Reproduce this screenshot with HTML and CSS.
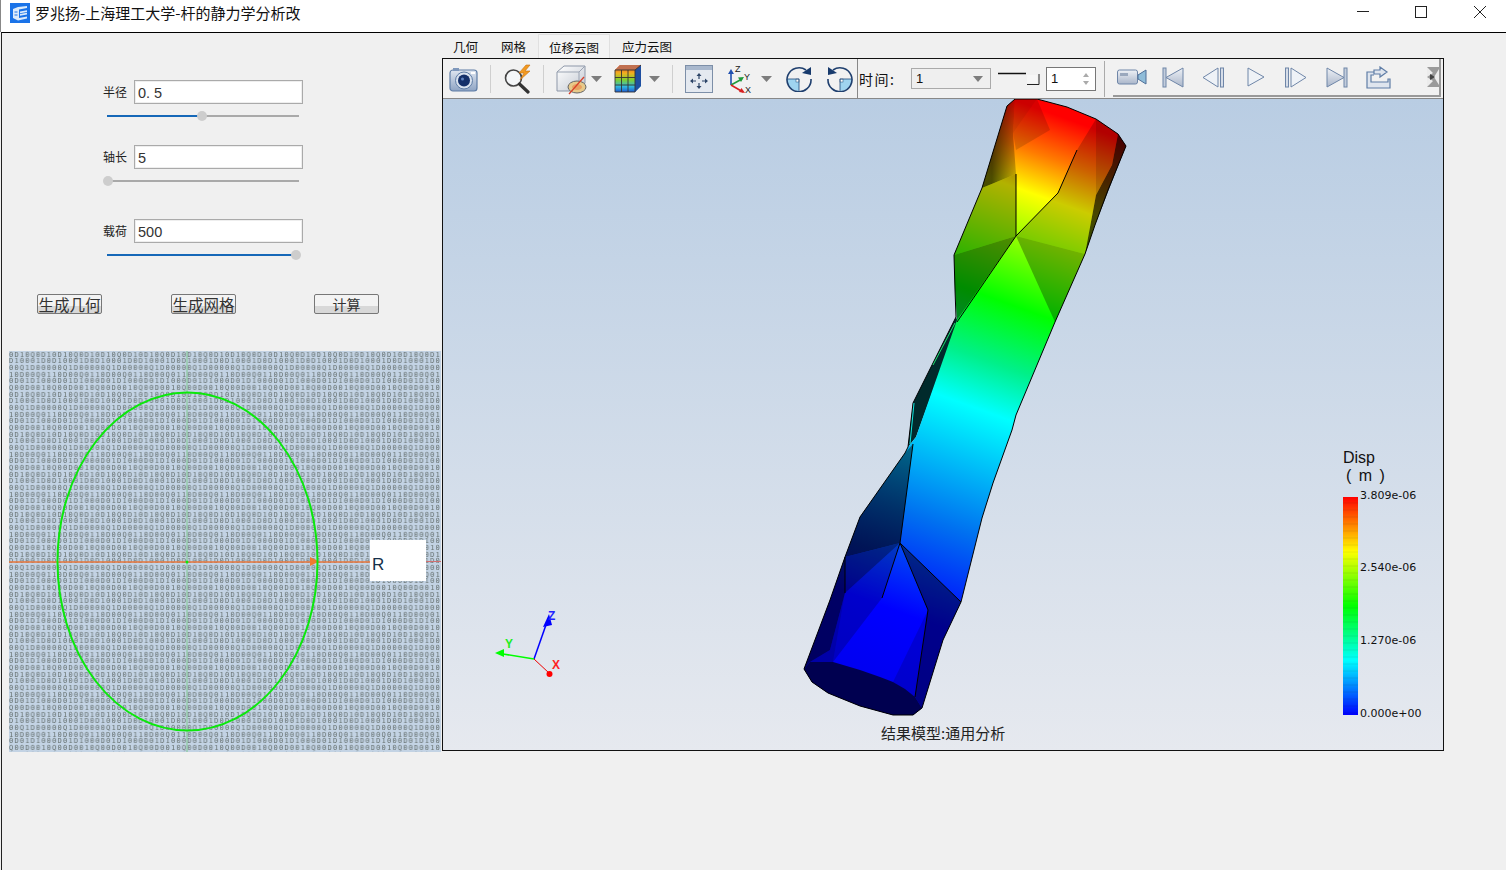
FILE: index.html
```html
<!DOCTYPE html>
<html lang="zh">
<head>
<meta charset="utf-8">
<title>罗兆扬-上海理工大学-杆的静力学分析改</title>
<link rel="stylesheet" href="styles.css">
</head>
<body>
<header class="titlebar">
  <svg class="app-icon" viewBox="0 0 20 20"><rect width="20" height="20" fill="#1a73e8"/><path d="M3 6 L8 4 L17 3 L17 5 L9 6.5 L9 15 L17 13.5 L17 15.5 L8 17.5 L3 15 Z" fill="#dcebfb"/><path d="M9.5 8 L17 6.5 M9.5 10 L17 8.7 M9.5 12 L17 10.8 M4.5 9 L7.5 9 M4.5 12 L7.5 12" stroke="#1a73e8" fill="none"/><path d="M10 8.5 L17 7.2 V9 L10 10.2Z M10 11 L17 9.8 V11.6 L10 12.8Z" fill="#dcebfb"/></svg>
  <span class="title">罗兆扬-上海理工大学-杆的静力学分析改</span>
  <div class="winctl">
    <svg class="wc" viewBox="0 0 12 12"><path d="M0 5.5H12" stroke="#222"/></svg>
    <svg class="wc wmax" viewBox="0 0 12 12"><rect x=".5" y=".5" width="11" height="11" fill="none" stroke="#222"/></svg>
    <svg class="wc wclose" viewBox="0 0 12 12"><path d="M0 0L12 12M12 0L0 12" stroke="#222"/></svg>
  </div>
</header>
<main class="main">
  <section class="left">
    <div class="field first"><label>半径</label><input class="inp" value="0. 5"></div>
    <div class="slider"><div class="fill" style="width:95px"></div><div class="thumb" style="left:90px"></div></div>
    <div class="field second"><label>轴长</label><input class="inp" value="5"></div>
    <div class="slider"><div class="thumb" style="left:-4px"></div></div>
    <div class="field third"><label>载荷</label><input class="inp" value="500"></div>
    <div class="slider"><div class="fill" style="width:189px"></div><div class="thumb" style="left:184px"></div></div>
    <div class="buttons">
      <button class="btn">生成几何</button>
      <button class="btn b2">生成网格</button>
      <button class="btn b3">计算</button>
    </div>
    <svg class="sketch" viewBox="9 351 432 401">
      <defs>
        <pattern id="glyphs" x="9" y="351" width="43.2" height="40" patternUnits="userSpaceOnUse">
          <text class="gl" x="0" y="5.500">0D10Q0D1</text>
          <text class="gl" x="0" y="12.200">D10001D0</text>
          <text class="gl" x="0" y="18.800">00Q1D000</text>
          <text class="gl" x="0" y="25.500">10D00Q01</text>
          <text class="gl" x="0" y="32.200">0D01D100</text>
          <text class="gl" x="0" y="38.800">Q00D0010</text>
        </pattern>
      </defs>
      <rect x="9" y="351" width="432" height="401" fill="#c3d3e4"/>
      <rect x="9" y="351" width="432" height="401" fill="url(#glyphs)"/>
      <path d="M187 351V752" stroke="#7fc88f" stroke-width="1"/>
      <path d="M9 562H370" stroke="#e8763a" stroke-width="1.5"/>
      <path d="M426 561.5H441" stroke="#d07070" stroke-width="1"/>
      <path d="M310 557L319 561.5L310 566Z" fill="#f07a30"/>
      <ellipse cx="187.5" cy="561.5" rx="130" ry="169" fill="none" stroke="#0be80b" stroke-width="2"/>
      <circle cx="187" cy="562" r="1.5" fill="#0be80b"/>
      <rect x="370" y="540" width="56" height="41" fill="#fff"/>
      <text class="rlabel" x="372" y="570">R</text>
    </svg>
  </section>
  <section class="right">
    <nav class="tabs">
      <span class="tab">几何</span>
      <span class="tab">网格</span>
      <span class="tab active">位移云图</span>
      <span class="tab">应力云图</span>
    </nav>
    <div class="frame">
      <div class="toolbar">
        <svg class="t cam" width="30" height="28" viewBox="0 0 30 28"><defs><linearGradient id="camg" x1="0" y1="0" x2="0" y2="1"><stop offset="0" stop-color="#dfe6f0"/><stop offset="1" stop-color="#8ea4c4"/></linearGradient></defs><rect x="1" y="5" width="27" height="21" rx="3" fill="url(#camg)" stroke="#5f7da6" stroke-width="1.2"/><rect x="4" y="3" width="6" height="3" fill="#7f98bc"/><rect x="22" y="7" width="4" height="2" fill="#fff"/><circle cx="15" cy="15.5" r="8.5" fill="#d9e2ee" stroke="#5f7da6"/><circle cx="15" cy="15.5" r="6" fill="#14306a"/><circle cx="13.5" cy="14" r="1.5" fill="#5e82c0"/></svg>
        <i class="sep s1"></i>
        <svg class="t mag" width="30" height="30" viewBox="0 0 30 30"><circle cx="10.5" cy="14" r="8" fill="#f4f6f8" stroke="#444" stroke-width="1.6"/><path d="M16.5 20L25 28" stroke="#333" stroke-width="3.2" stroke-linecap="round"/><path d="M23 1L16 9H21L17 16L27 7H22L27 1Z" fill="#f29a22" stroke="#c77212" stroke-width=".6"/></svg>
        <i class="sep s2"></i>
        <svg class="t cube" width="32" height="32" viewBox="0 0 32 32"><defs><linearGradient id="cubeg" x1="0" y1="0" x2="1" y2="1"><stop offset="0" stop-color="#fff"/><stop offset="1" stop-color="#c2c8d2"/></linearGradient></defs><path d="M1 9L8 3H29V20L23 28H1Z" fill="url(#cubeg)" stroke="#8d97a8"/><path d="M1 9H23V28M23 9L29 3" fill="none" stroke="#9aa3b2"/><ellipse cx="21" cy="24" rx="9" ry="6" fill="#e7c98a" stroke="#666"/><ellipse cx="21" cy="24" rx="5" ry="3" fill="#e9a060"/><path d="M13 31L28 14" stroke="#d8402a" stroke-width="1.3"/></svg>
        <svg class="t arrow a1" width="11" height="6" viewBox="0 0 11 6"><path d="M0 0H11L5.500 6Z" fill="#7d7d7d"/></svg>
        <svg class="t ccube" width="28" height="29" viewBox="0 0 28 29"><defs><linearGradient id="ccg" x1="0" y1="0" x2="0" y2="1"><stop offset="0" stop-color="#e8402a"/><stop offset=".3" stop-color="#f2b020"/><stop offset=".55" stop-color="#7ed030"/><stop offset=".8" stop-color="#30b8e0"/><stop offset="1" stop-color="#1f5bd0"/></linearGradient></defs><path d="M1 6L6 1H27V22L21 28H1Z" fill="url(#ccg)"/><path d="M21 6L27 1V22L21 28Z" fill="#1f4fa0"/><path d="M1 6L6 1H27L21 6Z" fill="#c07050"/><path d="M1 6H21V28H1ZM1 13.500H21M1 21H21M7.500 6V28M14 6V28M21 6L27 1" fill="none" stroke="#333" stroke-width=".9"/></svg>
        <svg class="t arrow a2" width="11" height="6" viewBox="0 0 11 6"><path d="M0 0H11L5.500 6Z" fill="#7d7d7d"/></svg>
        <i class="sep s3"></i>
        <svg class="t fit" width="28" height="28" viewBox="0 0 28 28"><rect x=".5" y=".5" width="27" height="27" fill="#e4e9f0" stroke="#7d8fa8"/><rect x="1" y="1" width="26" height="4" fill="#a9b8cd"/><path d="M14 8L11.500 11H16.500ZM14 24L11.500 21H16.500ZM5 16L8 13.500V18.500ZM23 16L20 13.500V18.500Z" fill="#2d4568"/><path d="M14 11V14M14 18V21M8 16H11M17 16H20" stroke="#2d4568" stroke-width="1.2"/></svg>
        <svg class="t axes" width="24" height="30" viewBox="0 0 24 30"><path d="M2 21V8" stroke="#2050b0" stroke-width="1.6"/><path d="M2 5L-1 10H5Z" fill="#2050b0"/><path d="M2 21L13 15" stroke="#1e9a3a" stroke-width="1.6"/><path d="M15 13L9 13.500L12 18Z" fill="#1e9a3a"/><path d="M2 21L14 28" stroke="#d82020" stroke-width="1.6"/><path d="M16 29L10 28L12.500 24Z" fill="#d82020"/><text class="ax" x="6" y="8">Z</text><text class="ax" x="15" y="16">Y</text><text class="ax" x="16" y="29">X</text></svg>
        <svg class="t arrow a3" width="11" height="6" viewBox="0 0 11 6"><path d="M0 0H11L5.500 6Z" fill="#7d7d7d"/></svg>
        <svg class="t rot" width="26" height="26" viewBox="0 0 26 26"><path d="M1 13H13V25A12 12 0 0 1 1 13Z" fill="#9fd4f0"/><rect x="10" y="13" width="3" height="3" fill="#fff" stroke="#1f4a7a" stroke-width=".5"/><path d="M1 13H13V25" fill="none" stroke="#1f4a7a" stroke-width=".8"/><path d="M20 4A12 12 0 1 0 25 13" fill="none" stroke="#1f3f6e" stroke-width="1.6"/><path d="M25 1L25 9L16 7Z" fill="#173a6c"/></svg>
        <svg class="t rot r2" width="26" height="26" viewBox="0 0 26 26"><path d="M25 13H13V25A12 12 0 0 0 25 13Z" fill="#9fd4f0"/><rect x="13" y="13" width="3" height="3" fill="#fff" stroke="#1f4a7a" stroke-width=".5"/><path d="M25 13H13V25" fill="none" stroke="#1f4a7a" stroke-width=".8"/><path d="M6 4A12 12 0 1 1 1 13" fill="none" stroke="#1f3f6e" stroke-width="1.6"/><path d="M1 1L1 9L10 7Z" fill="#173a6c"/></svg>
        <i class="darksep"></i>
        <span class="timelbl">时间:</span>
        <div class="combo"><span>1</span><b class="caret"></b></div>
        <svg class="t step" width="42" height="16" viewBox="0 0 42 16"><path d="M0 2.500H28" stroke="#111" stroke-width="1.500"/><path d="M29 13.500H41V3" fill="none" stroke="#222"/><path d="M29 4H39V12H29Z" fill="#f6f6f6"/></svg>
        <div class="spin"><span>1</span><b class="up"></b><b class="dn"></b></div>
        <i class="sep s4"></i>
        <div class="playbar">
          <svg class="p p1" width="30" height="18" viewBox="0 0 30 18"><defs><linearGradient id="pg" x1="0" y1="0" x2="0" y2="1"><stop offset="0" stop-color="#eef1f6"/><stop offset="1" stop-color="#aab6ca"/></linearGradient></defs><rect x=".5" y="2" width="20" height="14" rx="2" fill="url(#pg)" stroke="#6f86a8"/><rect x="3" y="5" width="8" height="3" fill="#9aa8bd"/><path d="M21 7L29 2V16L21 11Z" fill="#8fbcd8" stroke="#4e6e98"/></svg>
          <svg class="p p2" width="22" height="21" viewBox="0 0 22 21"><path d="M21 1V20L4 10.500Z" fill="url(#pg)" stroke="#6f86a8"/><rect x="1" y="1" width="3" height="19" fill="#c3cddc" stroke="#6f86a8"/></svg>
          <svg class="p p3" width="23" height="21" viewBox="0 0 23 21"><path d="M16 1V20L1 10.500Z" fill="#eef2f7" stroke="#6f86a8"/><rect x="18.500" y="1" width="3" height="19" fill="#d6dde8" stroke="#6f86a8"/></svg>
          <svg class="p p4" width="18" height="20" viewBox="0 0 18 20"><path d="M1 1V19L17 10Z" fill="#eef2f7" stroke="#6f86a8"/></svg>
          <svg class="p p5" width="23" height="21" viewBox="0 0 23 21"><path d="M7 1V20L22 10.500Z" fill="#eef2f7" stroke="#6f86a8"/><rect x="1.500" y="1" width="3" height="19" fill="#d6dde8" stroke="#6f86a8"/></svg>
          <svg class="p p6" width="22" height="21" viewBox="0 0 22 21"><path d="M1 1V20L18 10.500Z" fill="url(#pg)" stroke="#6f86a8"/><rect x="18" y="1" width="3" height="19" fill="#c3cddc" stroke="#6f86a8"/></svg>
          <svg class="p p7" width="25" height="23" viewBox="0 0 25 23"><path d="M8 6H1V22H24V13H22V16H5V9H8" fill="#dfe5ee" stroke="#5f7da6" stroke-width="1.2"/><path d="M8 4H14V1L21 6L14 11V8H8Z" fill="#dfe5ee" stroke="#5f7da6" stroke-width="1.2"/></svg>
          <svg class="p p8" width="12" height="20" viewBox="0 0 12 20"><rect width="12" height="20" fill="#9a9a9a"/><path d="M0 0L6 6L0 10L6 14L0 20ZM12 2L7 10L12 18Z" fill="#ececec"/><path d="M3 7L8 10L3 13Z" fill="#444"/></svg>
        </div>
      </div>
      <div class="view">
        <svg class="scene" viewBox="443 99 1000 651">
          <defs>
            <linearGradient id="bg" x1="0" y1="0" x2="0" y2="1"><stop offset="0" stop-color="#b9cde3"/><stop offset="1" stop-color="#e6e9ef"/></linearGradient>
            <linearGradient id="rb" gradientUnits="userSpaceOnUse" x1="1070" y1="120" x2="865" y2="690">
              <stop offset="0" stop-color="#f00"/><stop offset=".07" stop-color="#ff7a00"/><stop offset=".135" stop-color="#ff0"/><stop offset=".32" stop-color="#0f0"/><stop offset=".42" stop-color="#00f08a"/><stop offset=".5" stop-color="#0ff"/><stop offset=".7" stop-color="#0070f0"/><stop offset=".86" stop-color="#00f"/><stop offset="1" stop-color="#00e"/>
            </linearGradient>
            <linearGradient id="shL" gradientUnits="userSpaceOnUse" x1="992" y1="0" x2="1020" y2="0"><stop offset="0" stop-color="#000" stop-opacity=".7"/><stop offset="1" stop-color="#000" stop-opacity=".15"/></linearGradient>
            <linearGradient id="shLow" gradientUnits="userSpaceOnUse" x1="905" y1="450" x2="880" y2="550"><stop offset="0" stop-color="#000" stop-opacity=".45"/><stop offset="1" stop-color="#000" stop-opacity=".65"/></linearGradient>
          </defs>
          <rect x="443" y="99" width="1000" height="651" fill="url(#bg)"/>
          <path class="sliver" d="M956 317L913 403L908 447L916 437L958 322Z"/>
          <path class="body" d="M1015 99L1037 99L1067 107L1096 119L1118 134L1126 146L1108 190L1095 225L1085 254L1055 322L1016 415L1012 430L993 483L982 518L961 602L943 640L922 708L913 715L893 715L860 706L828 693L812 682L804 669L830 600L845 557L860 517L905 453L908 447L916 437L957 320L955 290L954 255L982 188L1007 106Z"/>
          <path class="sh" fill="url(#shL)" d="M1015 99L1007 106L982 188L1016 174L1013 133Z"/>
          <path class="sh s30" d="M982 188L1016 174L1016 236L954 255Z"/>
          <path class="sh s45" d="M954 255L1016 236L957 320L955 290Z"/>
          <path class="sh s20" d="M1015 99L1037 99L1013 133Z"/>
          <path class="sh s15" d="M1037 99L1013 133L1016 150L1050 130Z"/>
          <path class="sh s30" d="M1096 119L1118 134L1112 165L1096 195Z"/>
          <path class="sh s70" d="M1118 134L1126 146L1095 225L1085 254L1096 195L1112 165Z"/>
          <path class="sh s20" d="M1077 150L1096 119L1096 195L1085 254L1016 236L1058 193Z"/>
          <path class="sh s30" d="M1016 236L1085 254L1055 322Z"/>
          <path class="sh" fill="url(#shLow)" d="M913 444L905 453L860 517L845 557L900 543Z"/>
          <path class="sh s45" d="M845 557L900 543L845 593Z"/>
          <path class="sh s20" d="M845 593L900 543L882 598L833 662Z"/>
          <path class="sh s60" d="M845 557L845 593L830 650L810 662L804 669L830 600Z"/>
          <path class="sh s30" d="M845 593L833 662L810 662L830 650Z"/>
          <path class="sh s45" d="M900 543L961 602L943 640L922 708L915 697L928 610Z"/>
          <path class="sh s15" d="M928 610L915 697L893 682Z"/>
          <path class="cap" d="M804 669L810 662L833 662L860 670L880 677L893 682L905 689L915 697L922 708L913 715L893 715L860 706L828 693L812 682Z"/>
          <path class="edge" d="M1015 99L1037 99L1067 107L1096 119L1118 134L1126 146L1108 190L1095 225L1085 254L1055 322L1016 415L1012 430L993 483L982 518L961 602L943 640L922 708L913 715L893 715L860 706L828 693L812 682L804 669L830 600L845 557L860 517L905 453L908 447L913 403L956 317L955 290L954 255L982 188L1007 106Z"/>
          <path class="edge" d="M1016 174V236L1058 193L1077 150M1016 236L957 322M913 444L900 543L961 602M900 543L882 598M900 543L928 610L915 697M845 557L845 593"/>
          <path class="sliveredge" d="M914 403L910 444"/>
          <path class="sliverg" d="M955 323L933 365"/>
          <path class="tz" d="M534 659L547 622"/>
          <path class="tzf" d="M549 614L543 627L552 625Z"/>
          <path class="ty" d="M534 659L503 654"/>
          <path class="tyf" d="M495 653L504 649L504 657Z"/>
          <path class="tx" d="M534 659L549 673"/>
          <circle cx="549.500" cy="674" r="3" fill="#f00"/>
          <text class="tl lz" x="548" y="620">Z</text>
          <text class="tl ly" x="505" y="648">Y</text>
          <text class="tl lx" x="552" y="669">X</text>
        </svg>
        <div class="legend">
          <div class="ltitle">Disp</div>
          <div class="lunit">( m )</div>
          <div class="lbody">
            <div class="bar"></div>
            <div class="ticks"><span>3.809e-06</span><span>2.540e-06</span><span>1.270e-06</span><span>0.000e+00</span></div>
          </div>
        </div>
        <div class="caption">结果模型:通用分析</div>
      </div>
    </div>
  </section>
</main>
</body>
</html>
```
FILE: styles.css
```css
* { box-sizing: border-box; }
html, body { margin: 0; height: 870px; overflow: hidden; }
body { background: #f0f0f0; font-family: "Liberation Sans", "Noto Sans CJK SC", sans-serif; color: #111; }
svg { display: block; }

.titlebar { height: 32px; background: #fff; display: flex; align-items: center; border-left: 1px solid #888; }
.app-icon { width: 20px; height: 20px; margin-left: 9px; margin-top: -6px; }
.title { margin-left: 5px; font: 15px/1 "Noto Sans CJK SC", sans-serif; margin-top: -7px; color: #111; white-space: nowrap; }
.winctl { margin-left: auto; display: flex; margin-right: 20px; margin-top: -8px; }
.wc { width: 12px; height: 12px; }
.wmax { margin-left: 46px; }
.wclose { margin-left: 47px; }

.main { height: 838px; margin-left: 1px; border-left: 1px solid #222; border-top: 1px solid #000; display: flex; }
.left { width: 440px; flex: none; }
.field { display: flex; align-items: center; margin-left: 101px; height: 24px; }
.field.first { margin-top: 47px; }
.field.second { margin-top: 19px; }
.field.third { margin-top: 28px; }
.field label { width: 31px; font: 12px/1 "Noto Sans CJK SC", sans-serif; color: #222; }
.inp { width: 169px; height: 24px; border: 1px solid #aaa; box-shadow: inset 0 0 0 1px #eee; background: #fff; padding: 2px 3px 0; font: 14.5px "Liberation Sans", sans-serif; color: #333; border-radius: 0; outline: none; }

.slider { position: relative; width: 192px; height: 20px; margin: 2px 0 0 105px; }
.slider::before { content: ""; display: block; position: absolute; left: 0; right: 0; top: 9px; height: 2px; background: #a9a9a9; }
.fill { position: absolute; left: 0; top: 9px; height: 2px; background: #1668b8; }
.thumb { position: absolute; top: 5px; width: 10px; height: 10px; border-radius: 50%; background: #cdcdcd; }

.buttons { display: flex; margin: 29px 0 0 35px; }
.btn { width: 65px; height: 20px; padding: 0; border: 1px solid #777; border-radius: 2px; background: linear-gradient(#f3f3f3 62%, #d8d8d8 62%); font: 15.5px/18px "Noto Sans CJK SC", sans-serif; color: #333; white-space: nowrap; }
.b2 { margin-left: 69px; }
.b3 { margin-left: 78px; font-size: 14px; }

.sketch { width: 432px; height: 401px; margin: 37px 0 0 7px; }
.gl { font: 7px "DejaVu Sans Mono", monospace; letter-spacing: 1.2px; fill: #65706f; }
.rlabel { font: 17px "Liberation Sans", sans-serif; fill: #16304a; }

.right { flex: 1; min-width: 0; }
.tabs { height: 25px; display: flex; align-items: flex-end; }
.tab { height: 24px; padding: 0 11px; margin-right: 1px; font: 12.5px/25px "Noto Sans CJK SC", sans-serif; color: #111; white-space: nowrap; }
.tab.active { border: 1px solid #e0e0e0; border-bottom: 0; padding: 0 10px; background: #f4f4f4; }

.frame { width: 1002px; height: 693px; border: 1px solid #111; display: flex; flex-direction: column; }
.toolbar { height: 40px; flex: none; display: flex; align-items: center; border-bottom: 1px solid #888; background: #f1f1f1; }
.sep { width: 1px; height: 28px; background: #cfcfcf; flex: none; }
.cam { margin-left: 6px; }
.s1 { margin-left: 11px; }
.mag { margin-left: 12px; }
.s2 { margin-left: 10px; }
.cube { margin-left: 12px; }
.a1 { margin-left: 3px; }
.ccube { margin-left: 12px; }
.a2 { margin-left: 7px; }
.s3 { margin-left: 12px; }
.fit { margin-left: 12px; }
.axes { margin-left: 16px; overflow: visible; }
.a3 { margin-left: 8px; }
.rot { margin-left: 14px; }
.r2 { margin-left: 15px; }
.darksep { width: 1px; height: 39px; background: #888; margin-left: 4px; flex: none; }
.ax { font: 9px "Liberation Sans", sans-serif; fill: #222; }
.timelbl { margin-left: 1px; width: 52px; font: 14px/1 "Noto Sans CJK SC", sans-serif; color: #111; letter-spacing: 1.5px; }
.combo { width: 80px; height: 21px; border: 1px solid #aaa; background: #efefef; display: flex; align-items: center; padding-left: 4px; font: 13px "Liberation Sans", sans-serif; position: relative; }
.caret { position: absolute; right: 7px; top: 7px; border: 5px solid transparent; border-top: 6px solid #7d7d7d; border-bottom: 0; }
.step { margin-left: 7px; }
.spin { margin-left: 6px; width: 50px; height: 24px; border: 1px solid #777; background: #fff; display: flex; align-items: center; padding-left: 4px; font: 13px "Liberation Sans", sans-serif; position: relative; }
.up, .dn { position: absolute; right: 6px; border: 3px solid transparent; }
.up { top: 5px; border-bottom: 4px solid #aaa; border-top: 0; }
.dn { bottom: 5px; border-top: 4px solid #aaa; border-bottom: 0; }
.s4 { margin-left: 8px; height: 36px; background: #aaa; }
.playbar { margin-left: 8px; width: 328px; height: 38px; display: flex; align-items: center; border-right: 2px solid #999; border-bottom: 2px solid #999; margin-top: -1px; }
.p1 { margin-left: 4px; }
.p2 { margin-left: 15px; }
.p3 { margin-left: 18px; }
.p4 { margin-left: 22px; }
.p5 { margin-left: 19px; }
.p6 { margin-left: 19px; }
.p7 { margin-left: 18px; }
.p8 { margin-left: 36px; }

.view { flex: 1; position: relative; overflow: hidden; }
.scene { width: 1000px; height: 651px; }
.body { fill: url(#rb); }
.sh { stroke: none; }
.s15 { fill: #000; fill-opacity: .15; }
.s20 { fill: #000; fill-opacity: .2; }
.s30 { fill: #000; fill-opacity: .3; }
.s45 { fill: #000; fill-opacity: .45; }
.s60 { fill: #000; fill-opacity: .6; }
.s70 { fill: #000; fill-opacity: .72; }
.cap { fill: #000050; }
.edge { fill: none; stroke: #000; stroke-width: 1; }
.sliver { fill: #012a2c; }
.sliveredge { fill: none; stroke: #12e8e0; stroke-width: 1; }
.sliverg { fill: none; stroke: #1ee070; stroke-width: 1; }
.tz { stroke: #00f; stroke-width: 1.500; }
.tzf { fill: #00f; }
.ty { stroke-width: 1.500; stroke: #0f0; }
.tyf { fill: #0f0; }
.tx { stroke: #e00; stroke-width: 1; }
.tl { font: bold 12px "Liberation Sans", sans-serif; }
.lz { fill: #22f; }
.ly { fill: #2e2; }
.lx { fill: #f22; }

.legend { position: absolute; left: 900px; top: 350px; width: 90px; }
.ltitle { font: 16px/18px "Liberation Sans", sans-serif; color: #111; }
.lunit { font: 16px/18px "Liberation Sans", sans-serif; color: #111; margin-left: 3px; white-space: pre; letter-spacing: 1.5px; }
.lbody { display: flex; margin-top: 12px; height: 218px; }
.bar { width: 15px; height: 218px; background: repeating-linear-gradient(rgba(0,0,0,0) 0 5px, rgba(0,0,0,.04) 5px 7px), linear-gradient(#f00, #ff0 25%, #0f0 50%, #0ff 75%, #00f); }
.ticks { position: relative; margin-left: 2px; flex: 1; }
.ticks span { position: absolute; left: 0; font: 11px/13px "DejaVu Sans", sans-serif; color: #111; white-space: nowrap; }
.ticks span:nth-child(1) { top: -8px; }
.ticks span:nth-child(2) { top: 64px; }
.ticks span:nth-child(3) { top: 137px; }
.ticks span:nth-child(4) { top: 210px; }
.caption { position: absolute; left: 438px; top: 625px; font: 15px/18px "Noto Sans CJK SC", sans-serif; color: #222; white-space: nowrap; }
```
